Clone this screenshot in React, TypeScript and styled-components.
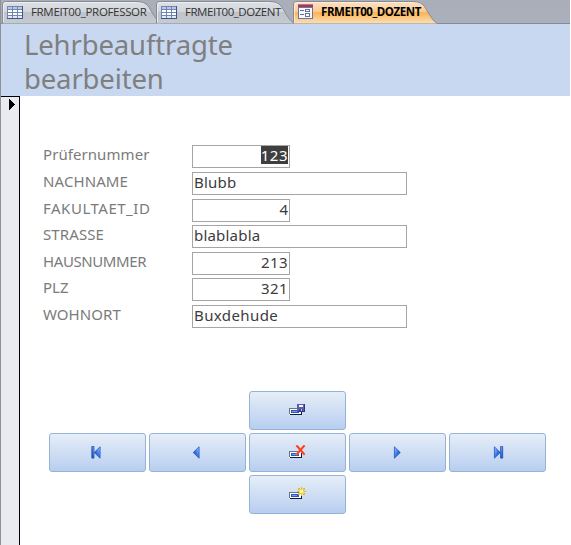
import React from "react";
import styled, { createGlobalStyle } from "styled-components";

const GlobalStyle = createGlobalStyle`
  * { box-sizing: border-box; }
  body { margin: 0; background: #fff; font-family: "Noto Sans", "Open Sans", sans-serif; }
`;

const Window = styled.div`
  width: 570px;
  height: 545px;
  display: flex;
  flex-direction: column;
  border-left: 1px solid #8d9299;
  overflow: hidden;
`;

const TabBar = styled.nav`
  flex: none;
  height: 24px;
  display: flex;
  background: linear-gradient(#a9aeb8, #abb1bc 23px, #868b94 23px);
  padding-left: 1px;
`;

const Tab = styled.div<{ $width: number; $active?: boolean }>`
  flex: none;
  position: relative;
  width: ${(p) => p.$width}px;
  height: 24px;
  display: flex;
  align-items: center;
  padding-left: 5px;
  color: ${(p) => (p.$active ? "#000" : "#333")};
  font-weight: ${(p) => (p.$active ? 700 : 400)};
`;

const TabShape = styled.svg`
  position: absolute;
  left: 0;
  top: 0;
  overflow: visible;
`;

const TabIcon = styled.svg`
  position: relative;
  flex: none;
  margin-top: -1px;
`;

const TabText = styled.span<{ $spacing: number }>`
  position: relative;
  margin-left: 8px;
  font-family: "Open Sans", sans-serif;
  font-size: 11.5px;
  line-height: 20px;
  white-space: nowrap;
  letter-spacing: ${(p) => p.$spacing}px;
`;

const FormHeader = styled.header`
  flex: none;
  height: 72px;
  padding: 4px 0 0 23px;
  background: #c8d8f0;
`;

const Title = styled.h1`
  margin: 0;
  width: 260px;
  font-size: 27.5px;
  line-height: 34px;
  font-weight: 400;
  letter-spacing: -0.15px;
  color: #7f7f7f;
`;

const Body = styled.main`
  flex: 1;
  display: flex;
`;

const RecordSelector = styled.aside`
  width: 19px;
  border-top: 1px solid #000;
  border-right: 1px solid #000;
  background: #e9ebf1;
  padding: 2px 0 0 8px;
  svg { display: block; }
`;

const Detail = styled.section`
  flex: 1;
  padding: 49px 0 0 23px;
`;

const Fields = styled.div`
  display: grid;
  grid-template-rows: 27px 27px 26px 27px 26px 27px 23px;
`;

const FieldRow = styled.div`
  display: grid;
  grid-template-columns: 149px auto;
  justify-content: start;
  align-items: start;
`;

const Label = styled.label<{ $spacing: number }>`
  font-size: 15px;
  line-height: 18px;
  letter-spacing: ${(p) => p.$spacing}px;
  color: #7b7b7b;
`;

const Field = styled.div<{ $numeric?: boolean; $spacing: number }>`
  width: ${(p) => (p.$numeric ? 98 : 215)}px;
  height: 23px;
  border: 1px solid #a5a5a5;
  padding: 0 1px;
  font-size: 15px;
  line-height: 18px;
  text-align: ${(p) => (p.$numeric ? "right" : "left")};
  letter-spacing: ${(p) => p.$spacing}px;
  color: #3c3c3c;
`;

const Selection = styled.span`
  display: inline-block;
  height: 18px;
  background: #3f3f3f;
  color: #fff;
`;

const ButtonGrid = styled.div`
  margin: 63px 0 0 6px;
  display: grid;
  grid-template-columns: repeat(5, 97px);
  grid-auto-rows: 39px;
  gap: 3px;
`;

const NavButton = styled.button<{ $column: number; $row: number }>`
  grid-column: ${(p) => p.$column};
  grid-row: ${(p) => p.$row};
  display: flex;
  align-items: center;
  justify-content: center;
  padding: 0;
  border: 1px solid #95b3d7;
  border-radius: 3px;
  background: linear-gradient(#e6eef8, #b8cef0);
`;

const TableGlyph = () => (
  <TabIcon width="16" height="14" viewBox="0 0 16 14" shapeRendering="crispEdges">
    <path fill="#3f5488" d="M0 1h16v13H0z" />
    <path fill="#7186b4" d="M0 1h15v12H0z" />
    <path fill="#b8c8e4" d="M1 2h4v2H1zM6 2h4v2H6zM11 2h4v2h-4z" />
    <path fill="#fff" d="M1 5h4v2H1zM6 5h4v2H6zM11 5h4v2h-4zM1 8h4v2H1zM6 8h4v2H6zM11 8h4v2h-4z" />
    <path fill="#e3eaf6" d="M1 11h4v2H1zM6 11h4v2H6zM11 11h4v2h-4z" />
  </TabIcon>
);

const FormGlyph = () => (
  <TabIcon width="15" height="15" viewBox="0 0 15 15" shapeRendering="crispEdges">
    <path fill="#6878a0" d="M0 1h15v14H0z" />
    <path fill="#f6f8fc" d="M1 4h13v10H1z" />
    <path fill="#a53758" d="M0 0h15v3H0z" />
    <path fill="#cf7288" d="M0 0h15v1H0z" />
    <path fill="#61719c" d="M2 6h4v1H2zM2 10h4v1H2zM7 5h5v3H7zM7 9h5v4H7z" />
    <path fill="#fff" d="M8 6h3v1H8zM8 10h3v2H8z" />
  </TabIcon>
);

const TabBack = ({ width, active }: { width: number; active?: boolean }) => {
  const id = `tab-${width}`;
  const edge = width - 26;
  const curve = `C${edge + 11} 1.5 ${edge + 12} 8 ${edge + 16} 14 S${edge + 21} 22 ${edge + 25} 23.5`;
  return (
    <TabShape width={width} height="24">
      <defs>
        <linearGradient id={id} x1="0" y1="0" x2="0" y2="1">
          <stop offset="0" stopColor={active ? "#fce3c8" : "#dde0e5"} />
          <stop offset=".46" stopColor={active ? "#fbcb8e" : "#d2d5da"} />
          <stop offset=".5" stopColor={active ? "#fcb454" : "#c0c4ca"} />
          <stop offset="1" stopColor={active ? "#f9dfb8" : "#c6cad1"} />
        </linearGradient>
      </defs>
      <path d={`M.5 23.5V4Q.5 1.5 4 1.5H${edge} ${curve}`} fill={`url(#${id})`} stroke="#868b94" />
      <path d={`M1.5 22V4.5Q1.5 2.5 4 2.5H${edge}`} fill="none" stroke={active ? "#fff0dd" : "#f0f2f5"} strokeOpacity=".8" />
    </TabShape>
  );
};

const RecordBase = () => (
  <>
    <path fill="#fff" d="M0 6h12v7H0z" />
    <path fill="#6a7482" d="M0 6h12v1H0zM0 6h1v6H0z" />
    <path fill="#101c36" d="M1 12h12v1H1zM12 7h1v6h-1z" />
    <path fill="#2858c8" d="M2 8h8v3H2z" />
    <path fill="#6ea0f2" d="M3 9h5v1H3z" />
  </>
);

const RecordIcon = ({ kind }: { kind: "save" | "delete" | "new" }) => (
  <svg width="17" height="15" viewBox="0 0 17 15" shapeRendering="crispEdges">
    <g transform={kind === "delete" ? undefined : "translate(0 -1)"}>
      <RecordBase />
    </g>
    {kind === "save" && (
      <>
        <path fill="#35347c" d="M8 1h8v8H9V8H8z" />
        <path fill="#5f5db2" d="M8 1h7v7H8z" />
        <path fill="#f5f6ff" d="M10 2h4v2h-4z" />
        <path fill="#45438f" d="M10 6h4v2h-4z" />
        <path fill="#c9c9e8" d="M12 6h1v2h-1z" />
      </>
    )}
    {kind === "delete" && (
      <g shapeRendering="auto" fill="none" strokeLinecap="round">
        <path d="M8 1l7 8M15 1l-7 8" stroke="#ff8a70" strokeWidth="2.5" />
        <path d="M8 1l7 8M15 1l-7 8" stroke="#f23b1e" strokeWidth="1.6" />
      </g>
    )}
    {kind === "new" && (
      <>
        <path fill="#dcbd38" d="M12 0h1v9h-1zM8 4h9v1H8zM9 1h2v2H9zM14 1h2v2h-2zM9 6h2v2H9zM14 6h2v2h-2z" />
        <path fill="#ecd448" d="M10 2h5v5h-5z" />
        <path fill="#fff6a8" d="M11 3h3v3h-3z" />
      </>
    )}
  </svg>
);

const ArrowIcon = ({ back, end }: { back?: boolean; end?: boolean }) => {
  const inset = end ? 3 : 2;
  const size = end ? 13 : 9;
  return (
    <svg width={size} height="13" viewBox={`${back ? 0 : end ? -inset : -1} 0 ${size} 13`}>
      <defs>
        <linearGradient id="arrow" x1="0" y1="0" x2="1" y2="1">
          <stop offset="0" stopColor="#a8cbff" />
          <stop offset=".5" stopColor="#3c75e4" />
          <stop offset="1" stopColor="#143aa6" />
        </linearGradient>
      </defs>
      <g transform={back ? `translate(${size - inset - 0.5} 0) scale(-1 1)` : undefined}>
        <path d="M.4 .8L6.3 6.5.4 12.2z" fill="url(#arrow)" stroke="#2457c4" strokeWidth=".8" />
        {end && <path d="M6.5 .5h2.2v11.6H6.5z" fill="url(#arrow)" stroke="#2450b4" strokeWidth=".8" />}
      </g>
    </svg>
  );
};

const tabs = [
  { text: "FRMEIT00_PROFESSOR", width: 161, slot: 154, spacing: -0.33 },
  { text: "FRMEIT00_DOZENT", width: 140, slot: 137, spacing: -0.46 },
  { text: "FRMEIT00_DOZENT", width: 146, slot: 146, spacing: -0.42, active: true },
];

const fields = [
  { label: "Prüfernummer", ls: 0.07, value: "123", vs: 0.5, numeric: true, selected: true },
  { label: "NACHNAME", ls: 0.1, value: "Blubb", vs: 0.2 },
  { label: "FAKULTAET_ID", ls: 0.52, value: "4", vs: 0, numeric: true },
  { label: "STRASSE", ls: 0.1, value: "blablabla", vs: 0.2 },
  { label: "HAUSNUMMER", ls: -0.4, value: "213", vs: 0.4, numeric: true },
  { label: "PLZ", ls: 0, value: "321", vs: 0.4, numeric: true },
  { label: "WOHNORT", ls: 0.05, value: "Buxdehude", vs: 0.4 },
];

export default function App() {
  return (
    <Window>
      <GlobalStyle />
      <TabBar>
        {tabs.map((tab) => (
          <Tab key={tab.width} $width={tab.slot} $active={tab.active}>
            <TabBack width={tab.width} active={tab.active} />
            {tab.active ? <FormGlyph /> : <TableGlyph />}
            <TabText $spacing={tab.spacing}>{tab.text}</TabText>
          </Tab>
        ))}
      </TabBar>
      <FormHeader>
        <Title>Lehrbeauftragte<br />bearbeiten</Title>
      </FormHeader>
      <Body>
        <RecordSelector>
          <svg width="6" height="11" viewBox="0 0 6 11" shapeRendering="crispEdges">
            <path d="M0 0h1v1h1v1h1v1h1v1h1v1h1v1H5v1H4v1H3v1H2v1H1v1H0z" />
          </svg>
        </RecordSelector>
        <Detail>
          <Fields>
            {fields.map((f) => (
              <FieldRow key={f.label}>
                <Label $spacing={f.ls}>{f.label}</Label>
                <Field $numeric={f.numeric} $spacing={f.vs}>
                  {f.selected ? <Selection>{f.value}</Selection> : f.value}
                </Field>
              </FieldRow>
            ))}
          </Fields>
          <ButtonGrid>
            <NavButton $column={3} $row={1} aria-label="Speichern"><RecordIcon kind="save" /></NavButton>
            <NavButton $column={1} $row={2} aria-label="Erster"><ArrowIcon back end /></NavButton>
            <NavButton $column={2} $row={2} aria-label="Vorheriger"><ArrowIcon back /></NavButton>
            <NavButton $column={3} $row={2} aria-label="Löschen"><RecordIcon kind="delete" /></NavButton>
            <NavButton $column={4} $row={2} aria-label="Nächster"><ArrowIcon /></NavButton>
            <NavButton $column={5} $row={2} aria-label="Letzter"><ArrowIcon end /></NavButton>
            <NavButton $column={3} $row={3} aria-label="Neu"><RecordIcon kind="new" /></NavButton>
          </ButtonGrid>
        </Detail>
      </Body>
    </Window>
  );
}
